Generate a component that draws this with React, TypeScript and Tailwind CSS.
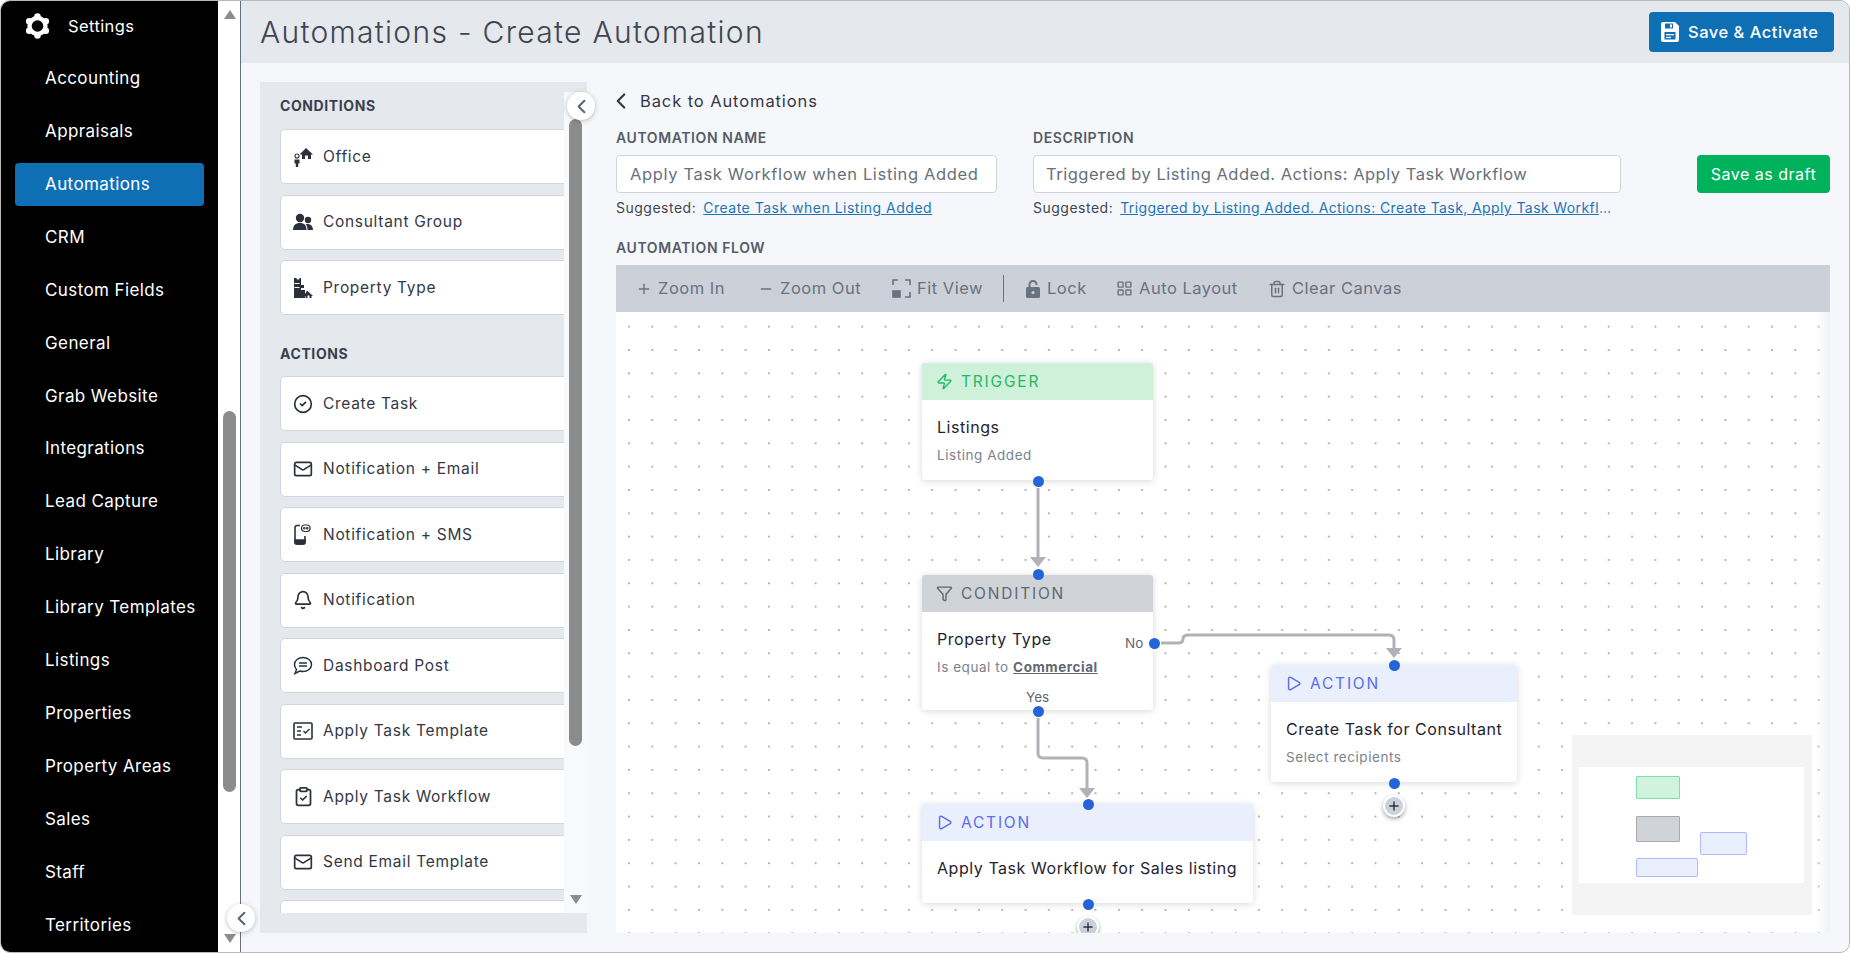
import {
  Bell,
  ChevronLeft,
  CircleCheck,
  ClipboardCheck,
  Filter,
  LayoutGrid,
  Mail,
  Minus,
  Play,
  Plus,
  Trash2,
  Zap,
} from "lucide-react";
import type { ReactNode } from "react";

const NAV_ITEMS = [
  "Accounting",
  "Appraisals",
  "Automations",
  "CRM",
  "Custom Fields",
  "General",
  "Grab Website",
  "Integrations",
  "Lead Capture",
  "Library",
  "Library Templates",
  "Listings",
  "Properties",
  "Property Areas",
  "Sales",
  "Staff",
  "Territories",
];

function GearIcon() {
  return (
    <svg width="27" height="26" viewBox="0 0 25 24" fill="none" className="-ml-[1px]">
      <circle cx="12.5" cy="12" r="7.4" stroke="white" strokeWidth="4" />
      <g fill="white">
        <circle cx="12.5" cy="3.2" r="3" />
        <circle cx="12.5" cy="20.8" r="3" />
        <circle cx="4.8" cy="7.6" r="3" />
        <circle cx="20.2" cy="7.6" r="3" />
        <circle cx="4.8" cy="16.4" r="3" />
        <circle cx="20.2" cy="16.4" r="3" />
      </g>
    </svg>
  );
}

function OfficeIcon() {
  return (
    <svg width="20" height="20" viewBox="0 0 20 20" fill="#2b303a">
      <path d="M13 1 20 7.5h-2V12h-3V8.5h-3V12H9V7.5H6.5z" />
      <circle cx="4" cy="9" r="2" fill="none" stroke="#2b303a" strokeWidth="1.1" />
      <path d="M1.5 12.5h5v4H5.2V20H2.8v-3.5H1.5z" />
    </svg>
  );
}

function GroupIcon() {
  return (
    <svg width="20" height="18" viewBox="0 0 20 18" fill="#2b303a">
      <circle cx="7" cy="5" r="4.2" />
      <circle cx="15" cy="7" r="3.2" />
      <path d="M0 17c0-4.5 2.5-7 7-7s6.5 2.5 6.5 7z" />
      <path d="M14.5 17c0-2.5-.6-4.5-1.8-5.8 3.8-1.2 7.3 1 7.3 5.8z" />
    </svg>
  );
}

function PropertyTypeIcon() {
  return (
    <svg width="20" height="22" viewBox="0 0 20 22" fill="#2b303a">
      <path d="M1 1h2l2 2 2-2h1v20H1z" />
      <path d="M8 8h3v3H8zM8 13h4v8H8z" />
      <path d="M14 13.5 20 19h-1.5v2h-2v-2.5h-2V21h-2v-2H11z" />
      <path d="M1.5 6h5v1h-5zM1.5 10h5v1h-5z" fill="white" />
    </svg>
  );
}

function SmsIcon() {
  return (
    <svg width="18" height="21" viewBox="0 0 18 21" fill="none" stroke="#2b303a" strokeWidth="1.6">
      <path d="M7 1.5H4a2 2 0 0 0-2 2V18a2 2 0 0 0 2 2h6a2 2 0 0 0 2-2v-6" />
      <path d="M2 16h10v2.5a1.5 1.5 0 0 1-1.5 1.5h-7A1.5 1.5 0 0 1 2 18.500z" fill="#2b303a" />
      <rect x="8.5" y="1" width="8.5" height="6.5" rx="3" strokeWidth="1.2" />
      <circle cx="11.3" cy="4.2" r=".5" />
      <circle cx="14.2" cy="4.2" r=".5" />
    </svg>
  );
}

function PostIcon() {
  return (
    <svg width="20" height="19" viewBox="0 0 20 19" fill="none" stroke="#2b303a" strokeWidth="1.5">
      <path d="M10 1.5c4.6 0 8.5 3 8.5 7s-3.900 7-8.500 7c-1.200 0-2.300-.2-3.300-.5L2 17.500l1.500-4C2.300 12.200 1.500 10.500 1.500 8.500c0-4 3.900-7 8.500-7z" />
      <path d="M6.5 7h7M6.5 10h7" strokeLinecap="round" />
    </svg>
  );
}

function TemplateIcon() {
  return (
    <svg width="20" height="18" viewBox="0 0 20 18" fill="none" stroke="#2b303a" strokeWidth="1.6">
      <rect x="1" y="1" width="18" height="16" rx="1" />
      <path d="M4 5h5M4 9h4M4 13h4" strokeWidth="1.4" />
      <path d="m10.5 9 2 2 4-4" strokeWidth="1.4" />
    </svg>
  );
}

function ConditionCard({ icon, label }: { icon: ReactNode; label: string }) {
  return (
    <div className="flex h-[55px] w-[320px] shrink-0 items-center rounded-[5px] border border-[#d1d5db] bg-white pl-[12px]">
      <span className="flex w-[30px] shrink-0 items-center">{icon}</span>
      <span className="text-[15.5px] tracking-[0.7px] text-[#333844]">{label}</span>
    </div>
  );
}

function Handle({ x, y }: { x: number; y: number }) {
  return (
    <span
      className="absolute z-10 h-[11px] w-[11px] rounded-full bg-[#2563d9]"
      style={{ left: x - 5.5, top: y - 5.5 }}
    />
  );
}

function AddButton({ x, y }: { x: number; y: number }) {
  return (
    <span
      className="absolute z-10 flex h-[22px] w-[22px] items-center justify-center rounded-full border-2 border-white bg-[#ccd0d8] shadow-[0_2px_4px_rgba(0,0,0,0.35)]"
      style={{ left: x - 11, top: y - 11 }}
    >
      <Plus size={14} strokeWidth={2.4} className="text-[#2b303a]" />
    </span>
  );
}

function FlowNode({
  x,
  y,
  width,
  height,
  headerClass,
  labelClass,
  icon,
  label,
  children,
}: {
  x: number;
  y: number;
  width: number;
  height: number;
  headerClass: string;
  labelClass: string;
  icon: ReactNode;
  label: string;
  children: ReactNode;
}) {
  return (
    <div
      className="absolute overflow-hidden rounded-[3px] bg-white shadow-[0_1px_7px_rgba(0,0,0,0.16)]"
      style={{ left: x, top: y, width, height }}
    >
      <div className={`flex h-[37px] items-center gap-[8px] pl-[14px] ${headerClass}`}>
        {icon}
        <span className={`text-[15.5px] tracking-[1.8px] ${labelClass}`}>{label}</span>
      </div>
      <div className="px-[15px] pt-[17px]">{children}</div>
    </div>
  );
}

function NodeTitle({ children }: { children: ReactNode }) {
  return <div className="whitespace-nowrap text-[16px] leading-[20px] tracking-[0.55px] text-[#1f2430]">{children}</div>;
}

function NodeSub({ children }: { children: ReactNode }) {
  return <div className="mt-[8px] text-[13.5px] tracking-[0.55px] text-[#7a8290]">{children}</div>;
}

function ToolbarItem({ icon, label, className }: { icon: ReactNode; label: string; className: string }) {
  return (
    <span className={`flex items-center gap-[6px] text-[16.5px] tracking-[0.5px] text-[#687280] ${className}`}>
      {icon}
      {label}
    </span>
  );
}

export default function App() {
  return (
    <div className="flex h-[953px] w-[1850px] overflow-hidden rounded-[10px] border border-[#b8b8b8] bg-[#f5f7fb] font-['Inter','Liberation_Sans',sans-serif]">
      <aside className="relative flex w-[240px] shrink-0 border-r border-[#667085] bg-white">
        <div className="w-[217px] shrink-0 bg-black pt-[3px]">
          <div className="flex h-[44px] items-center pl-[24px] text-[16.5px] tracking-[0.4px] text-white">
            <GearIcon />
            <span className="ml-[17px]">Settings</span>
          </div>
          <nav className="mt-[9.5px] flex flex-col gap-[9.9px] pl-[14px]">
            {NAV_ITEMS.map((item) => (
              <div
                key={item}
                className={`flex h-[43px] w-[189px] items-center rounded-[4px] pl-[30px] text-[17px] tracking-[0.4px] text-white ${
                  item === "Automations" ? "bg-[#0f6fb5]" : ""
                }`}
              >
                {item}
              </div>
            ))}
          </nav>
        </div>
        <div className="relative flex-1">
          <span className="absolute left-[6px] top-[9px] h-0 w-0 border-x-[6px] border-b-[9px] border-x-transparent border-b-[#8c8c8c]" />
          <span className="absolute left-[5px] top-[410px] h-[381px] w-[13px] rounded-[7px] bg-[#8c8c8c]" />
          <span className="absolute left-[6px] top-[933px] h-0 w-0 border-x-[6px] border-t-[9px] border-x-transparent border-t-[#8c8c8c]" />
        </div>
        <span className="absolute left-[226px] top-[903px] z-20 flex h-[28px] w-[28px] items-center justify-center rounded-full bg-white shadow-[0_1px_5px_rgba(0,0,0,0.25)]">
          <ChevronLeft size={23} strokeWidth={2.2} className="text-[#5b6675]" />
        </span>
      </aside>

      <main className="flex min-w-0 flex-1 flex-col">
        <header className="flex h-[62px] shrink-0 items-center justify-between bg-[#e5e8ed] pl-[19px] pr-[15px]">
          <h1 className="text-[30px] font-light tracking-[1.3px] text-[#3f4652]">Automations - Create Automation</h1>
          <button className="flex h-[40px] w-[185px] items-center gap-[9px] rounded-[4px] bg-[#0f6fb5] pl-[12px] text-[16.5px] font-medium tracking-[0.5px] text-white">
            <svg width="18" height="20" viewBox="0 0 18 20" fill="white">
              <path d="M2 0h12l4 4v14a2 2 0 0 1-2 2H2a2 2 0 0 1-2-2V2a2 2 0 0 1 2-2z" />
              <rect x="4" y="1.5" width="8" height="5" fill="#0f6fb5" />
              <rect x="9" y="2.5" width="2" height="3" fill="white" />
              <rect x="3.5" y="10" width="11" height="7.5" fill="#0f6fb5" />
              <rect x="5" y="12" width="8" height="1.3" fill="white" />
              <rect x="5" y="14.8" width="5" height="1.3" fill="white" />
            </svg>
            Save &amp; Activate
          </button>
        </header>

        <div className="flex flex-1 gap-[29px] pl-[19px] pt-[19px]">
          <section className="relative h-[851px] w-[327px] shrink-0 bg-[#e5e8ed] pt-[10px]">
            <div className="flex h-[821px]">
              <div className="w-[304px] shrink-0 overflow-hidden pl-[20px]">
                <h2 className="mt-[3px] text-[14px] font-bold tracking-[0.6px] text-[#3a404c]">CONDITIONS</h2>
                <div className="mt-[13px] flex flex-col gap-[10.5px]">
                  <ConditionCard icon={<OfficeIcon />} label="Office" />
                  <ConditionCard icon={<GroupIcon />} label="Consultant Group" />
                  <ConditionCard icon={<PropertyTypeIcon />} label="Property Type" />
                </div>
                <h2 className="mt-[27.5px] text-[14px] font-bold tracking-[0.6px] text-[#3a404c]">ACTIONS</h2>
                <div className="mt-[12.5px] flex flex-col gap-[10.5px]">
                  <ConditionCard icon={<CircleCheck size={20} color="#2b303a" />} label="Create Task" />
                  <ConditionCard icon={<Mail size={20} color="#2b303a" />} label="Notification + Email" />
                  <ConditionCard icon={<SmsIcon />} label="Notification + SMS" />
                  <ConditionCard icon={<Bell size={20} color="#2b303a" />} label="Notification" />
                  <ConditionCard icon={<PostIcon />} label="Dashboard Post" />
                  <ConditionCard icon={<TemplateIcon />} label="Apply Task Template" />
                  <ConditionCard icon={<ClipboardCheck size={21} color="#2b303a" />} label="Apply Task Workflow" />
                  <ConditionCard icon={<Mail size={20} color="#2b303a" />} label="Send Email Template" />
                  <ConditionCard icon={null} label="" />
                </div>
              </div>
              <div className="relative flex-1 bg-[#f8f9fb]">
                <span className="absolute left-[5px] top-[27px] h-[627px] w-[13px] rounded-[7px] bg-[#8c8c8c]" />
                <span className="absolute left-[6px] top-[803px] h-0 w-0 border-x-[6px] border-t-[9px] border-x-transparent border-t-[#8c8c8c]" />
              </div>
            </div>
            <span className="absolute left-[307px] top-[10px] z-20 flex h-[28px] w-[28px] items-center justify-center rounded-full bg-white shadow-[0_1px_5px_rgba(0,0,0,0.25)]">
              <ChevronLeft size={23} strokeWidth={2.2} className="text-[#5b6675]" />
            </span>
          </section>

          <section className="w-[1214px] shrink-0">
            <div className="mt-[7px] flex h-[24px] items-center gap-[6px] text-[16.5px] tracking-[0.9px] text-[#333844]">
              <ChevronLeft size={26} strokeWidth={2} className="-ml-[8px]" />
              <span>Back to Automations</span>
            </div>
            <div className="mt-[13.5px] flex">
              <div className="w-[417px] shrink-0">
                <div className="text-[14px] font-semibold tracking-[0.6px] text-[#555c68]">AUTOMATION NAME</div>
                <div className="mt-[7.5px] flex h-[38px] w-[381px] items-center whitespace-nowrap rounded-[4px] border border-[#ced4da] bg-white pl-[13px] text-[16.5px] tracking-[0.65px] text-[#68707c]">
                  Apply Task Workflow when Listing Added
                </div>
                <div className="mt-[4px] flex text-[14px] tracking-[0.5px] text-[#3f4652]">
                  <span>Suggested:</span>
                  <a className="ml-[7px] text-[#1f74b7] underline">Create Task when Listing Added</a>
                </div>
              </div>
              <div className="w-[664px] shrink-0">
                <div className="text-[14px] font-semibold tracking-[0.6px] text-[#555c68]">DESCRIPTION</div>
                <div className="mt-[7.5px] flex h-[38px] w-[588px] items-center whitespace-nowrap rounded-[4px] border border-[#ced4da] bg-white pl-[12px] text-[16.5px] tracking-[0.5px] text-[#68707c]">
                  Triggered by Listing Added. Actions: Apply Task Workflow
                </div>
                <div className="mt-[4px] flex w-[582px] text-[14px] tracking-[0.5px] text-[#3f4652]">
                  <span className="shrink-0">Suggested:</span>
                  <a className="ml-[7px] truncate tracking-[0.4px] text-[#1f74b7] underline">
                    Triggered by Listing Added. Actions: Create Task, Apply Task Workflow
                  </a>
                </div>
              </div>
              <button className="mt-[28px] h-[38px] w-[133px] rounded-[4px] bg-[#00b25b] text-[16px] tracking-[0.5px] text-white">
                Save as draft
              </button>
            </div>
            <div className="mt-[18.5px] text-[14px] font-semibold tracking-[0.6px] text-[#555c68]">AUTOMATION FLOW</div>
            <div className="mt-[7.5px] flex h-[47px] items-center bg-[#ccd0d8] pl-[20px]">
              <ToolbarItem className="w-[122px]" icon={<Plus size={16} />} label="Zoom In" />
              <ToolbarItem className="w-[134px]" icon={<Minus size={16} />} label="Zoom Out" />
              <ToolbarItem
                className="w-[111px]"
                label="Fit View"
                icon={
                  <svg width="19" height="19" viewBox="0 0 19 19" fill="none" stroke="#687280" strokeWidth="1.6">
                    <path d="M6 1H1v5M13 1h5v5M18 13v5h-5" />
                    <rect x="1" y="12" width="7" height="6" fill="#687280" />
                  </svg>
                }
              />
              <span className="mr-[21px] h-[27px] w-px bg-[#687280]" />
              <ToolbarItem
                className="w-[91px]"
                label="Lock"
                icon={
                  <svg width="16" height="20" viewBox="0 0 16 20" fill="#687280">
                    <path d="M3.5 9V5.5a4.5 4.5 0 0 1 9 0v.5h-2v-.5a2.5 2.5 0 0 0-5 0V9z" />
                    <rect x="1" y="8" width="14" height="11" rx="1.5" />
                    <circle cx="8" cy="13.5" r="1.5" fill="#ccd0d8" />
                  </svg>
                }
              />
              <ToolbarItem className="w-[152px]" icon={<LayoutGrid size={17} />} label="Auto Layout" />
              <ToolbarItem className="" icon={<Trash2 size={18} />} label="Clear Canvas" />
            </div>

            <div className="relative h-[621px] overflow-hidden bg-white bg-[radial-gradient(circle,#b4b4b9_0.7px,transparent_1px)] bg-size-[23.33px_23.33px] bg-position-[1.3px_3px]">
              {/* edges, in canvas coordinates */}
              <svg className="absolute inset-0" width="1214" height="621" fill="none">
                <g stroke="#b1b1b7" strokeWidth="3">
                  <path d="M422 176V246" />
                  <path d="M545 331H562Q567 331 567 327Q567 323 572 323H773Q778 323 778 328V337" />
                  <path d="M422 406V441Q422 446 427 446H466Q471 446 471 451V477" />
                </g>
                <g fill="#b1b1b7">
                  <path d="M414 245H430L422 255Z" />
                  <path d="M770 336H786L778 346Z" />
                  <path d="M463 476H479L471 486Z" />
                </g>
              </svg>

              <FlowNode
                x={306}
                y={51}
                width={231}
                height={117}
                headerClass="bg-[#cff1d9]"
                labelClass="text-[#25b865]"
                label="TRIGGER"
                icon={<Zap size={17} className="text-[#25b865]" />}
              >
                <NodeTitle>Listings</NodeTitle>
                <NodeSub>Listing Added</NodeSub>
              </FlowNode>
              <Handle x={422} y={169} />

              <Handle x={422} y={262} />
              <FlowNode
                x={306}
                y={263}
                width={231}
                height={135}
                headerClass="bg-[#d0d3d8]"
                labelClass="text-[#5f6872]"
                label="CONDITION"
                icon={<Filter size={17} className="text-[#5f6872]" />}
              >
                <NodeTitle>Property Type</NodeTitle>
                <NodeSub>
                  Is equal to <span className="font-bold text-[#5f6872] underline">Commercial</span>
                </NodeSub>
              </FlowNode>
              <span className="absolute left-[509px] top-[321px] z-10 text-[13.5px] text-[#5f6872]">No</span>
              <span className="absolute left-[410px] top-[375px] z-10 text-[13.5px] text-[#5f6872]">Yes</span>
              <Handle x={538} y={331} />
              <Handle x={422} y={399} />

              <Handle x={778} y={353} />
              <FlowNode
                x={655}
                y={353}
                width={246}
                height={117}
                headerClass="bg-[#e9effc]"
                labelClass="text-[#5b6cf0]"
                label="ACTION"
                icon={<Play size={17} className="text-[#5b6cf0]" />}
              >
                <NodeTitle>Create Task for Consultant</NodeTitle>
                <NodeSub>Select recipients</NodeSub>
              </FlowNode>
              <Handle x={778} y={471} />
              <AddButton x={778} y={494} />

              <Handle x={472} y={492} />
              <FlowNode
                x={306}
                y={492}
                width={331}
                height={99}
                headerClass="bg-[#e9effc]"
                labelClass="text-[#5b6cf0]"
                label="ACTION"
                icon={<Play size={17} className="text-[#5b6cf0]" />}
              >
                <NodeTitle>Apply Task Workflow for Sales listing</NodeTitle>
              </FlowNode>
              <Handle x={472} y={592} />
              <AddButton x={472} y={615} />

              {/* minimap */}
              <div className="absolute left-[956px] top-[423px] h-[180px] w-[240px] bg-[#f4f4f4]">
                <div className="absolute left-[7px] top-[32px] h-[116px] w-[225px] bg-white" />
                <div className="absolute left-[64px] top-[41px] h-[23px] w-[44px] rounded-[1px] border border-[#7be0a3] bg-[#d1f2dc]" />
                <div className="absolute left-[64px] top-[81px] h-[26px] w-[44px] rounded-[1px] border border-[#a8a8a8] bg-[#d0d3d8]" />
                <div className="absolute left-[128px] top-[97px] h-[23px] w-[47px] rounded-[2px] border border-[#b2b8ff] bg-[#e9effc]" />
                <div className="absolute left-[64px] top-[123px] h-[19px] w-[62px] rounded-[2px] border border-[#b2b8ff] bg-[#e9effc]" />
              </div>

              <div className="absolute bottom-0 right-0 top-0 w-[14px] bg-linear-to-r from-transparent to-[#f1f2f4]" />
            </div>
          </section>
        </div>
      </main>
    </div>
  );
}
